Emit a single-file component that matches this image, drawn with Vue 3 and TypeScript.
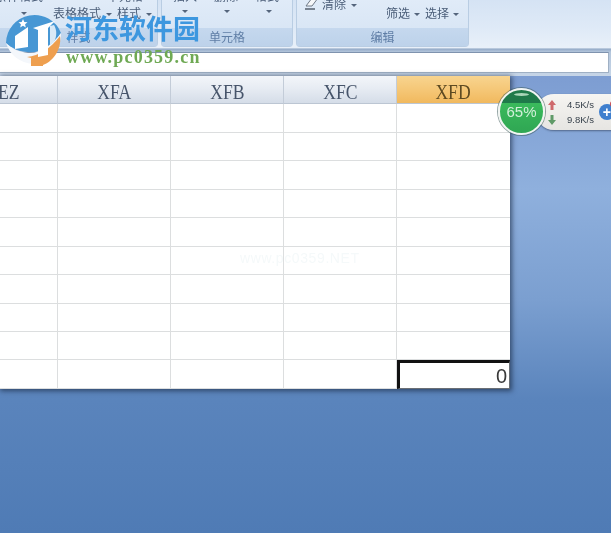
<script setup lang="ts">
const columns: string[] = ['EZ', 'XFA', 'XFB', 'XFC', 'XFD']
const rowCount = 10
const rows: number[] = Array.from({ length: rowCount }, (_, i) => i)
</script>

<template>
  <div class="page">
    <header class="ribbon">
      <section class="group g1">
        <div class="body">
          <div class="clipped c1"><span>条件格式</span><span>单元格</span></div>
          <div class="tools t1">
            <i class="caret lone" />
            <span class="tool">表格格式<i class="caret" /></span>
            <span class="tool">样式<i class="caret" /></span>
          </div>
        </div>
        <div class="label">样式</div>
      </section>
      <section class="group g2">
        <div class="body">
          <div class="clipped c2"><span>插入</span><span>删除</span><span>格式</span></div>
          <div class="tools t2"><i class="caret" /><i class="caret" /><i class="caret" /></div>
        </div>
        <div class="label">单元格</div>
      </section>
      <section class="group g3">
        <div class="body b3">
          <div class="clear">
            <svg width="15" height="12" viewBox="0 0 15 12">
              <path d="M2 8 8 0h6L8 8z" fill="#f6f7f9" stroke="#6f7885" />
              <path d="M1 11h10" stroke="#4d5663" stroke-width="1.400" />
            </svg>
            <span class="tool">清除<i class="caret" /></span>
          </div>
          <div class="tools t3">
            <span class="tool">筛选<i class="caret" /></span>
            <span class="tool">选择<i class="caret" /></span>
          </div>
        </div>
        <div class="label">编辑</div>
      </section>
    </header>

    <div class="formula"><div class="input" /></div>

    <main class="sheet">
      <div class="grid">
        <div
          v-for="c in columns"
          :key="c"
          class="head"
          :class="{ active: c === 'XFD', first: c === 'EZ' }"
        ><span>{{ c }}</span></div>
        <template v-for="r in rows" :key="r">
          <div
            v-for="c in columns"
            :key="c"
            class="cell"
            :class="{ selected: c === 'XFD' && r === rowCount - 1 }"
          >{{ c === 'XFD' && r === rowCount - 1 ? '0' : '' }}</div>
        </template>
      </div>
    </main>

    <div class="faint">www.pc0359.NET</div>

    <div class="brand">
      <svg class="logo" width="70" height="70" viewBox="0 0 70 70">
        <path d="M6 43A28.500 28.500 0 0 1 61 33C53 45 40 54 27 52 18 51 11 48 6 43z" fill="#4797d4" />
        <path d="M6 43C12 49 20 52 28 53 40 54 52 45 61 33 61 38 60 42 58 46 52 55 42 62 33 64 20 63 10 55 6 43z" fill="#f4f7fb" />
        <path d="M27 57C39 56 51 48 60 36 62 50 52 62 43 65V66H31V58z" fill="#ee9f4f" />
        <path d="M15 36 28 27V47L15 49z" fill="#fff" />
        <path d="M33 28 55 21 48 28V55L38 57V30z" fill="#fff" />
        <path d="M50 26 54 25C57 30 57 36 54 42L50 45z" fill="#d9e9f6" />
        <path d="M23 19l1.300 2.900 3.200.300-2.400 2.100.700 3.100-2.800-1.600-2.800 1.600.700-3.100-2.400-2.100 3.200-.300z" fill="#fff" />
      </svg>
      <div class="brand-name">河东软件园</div>
      <div class="brand-url">www.pc0359.cn</div>
    </div>

    <aside class="net">
      <div class="pill">
        <div class="arrows">
          <svg width="8" height="10" viewBox="0 0 8 10"><path d="M4 0 8 5H5.500V10h-3V5H0z" fill="#cf6a6c" /></svg>
          <svg width="8" height="10" viewBox="0 0 8 10"><path d="M4 10 8 5H5.500V0h-3V5H0z" fill="#5f9a68" /></svg>
        </div>
        <div class="speeds"><span>4.5K/s</span><span>9.8K/s</span></div>
        <div class="plus">+<i class="dot" /></div>
      </div>
      <div class="ball"><div class="cap" /><span>65%</span></div>
    </aside>
  </div>
</template>

<style scoped>
.page {
  position: relative;
  width: 611px;
  height: 533px;
  overflow: hidden;
  background: linear-gradient(180deg, #7d9dd2 76px, #8fb0dd 190px, #7b9fd0 300px, #5a84bc 400px, #4f7bb5 533px);
  font-family: "Noto Sans CJK SC", "Liberation Sans", sans-serif;
  filter: blur(0.35px);
}
.ribbon {
  display: flex;
  gap: 3px;
  height: 49px;
  box-sizing: border-box;
  padding-bottom: 2px;
  background: linear-gradient(180deg, #d5e3f4 0%, #dfeaf7 60%, #e9f0f9 100%);
  border-bottom: 1px solid #b8c8dc;
}
.group {
  display: flex;
  flex-direction: column;
  height: 47px;
  box-sizing: border-box;
  border: 1px solid #b9cde3;
  border-top: 0;
  border-radius: 0 0 4px 4px;
  background: linear-gradient(180deg, #e0ebf8, #d5e3f3);
}
.g1 { width: 158px; border-left: 0; border-radius: 0 0 4px 0; }
.g2 { width: 132px; }
.g3 { width: 173px; }
.body { height: 28px; position: relative; overflow: hidden; }
.label {
  height: 18px;
  line-height: 17px;
  text-align: center;
  font-size: 12px;
  color: #5f7ea6;
  background: linear-gradient(180deg, #c5d8ee, #bdd2ea);
}
.tool { font-size: 12px; line-height: 14px; color: #4a5d78; white-space: nowrap; }
.caret {
  display: inline-block;
  margin-left: 5px;
  vertical-align: middle;
  border: 3px solid transparent;
  border-top: 3px solid #55657c;
  border-bottom: 0;
}
.clipped {
  display: flex;
  margin-top: -11px;
  height: 14px;
  font-size: 12px;
  line-height: 14px;
  color: #4a5d78;
}
.c1 { gap: 64px; margin-left: -5px; }
.c2 { gap: 17px; padding-left: 11px; }
.tools { display: flex; }
.t1 { gap: 5px; padding-left: 21px; margin-top: 3px; align-items: center; }
.t1 .lone { margin: 0 21px 0 0; }
.t2 { gap: 36px; padding-left: 20px; margin-top: 7px; }
.t2 .caret { margin-left: 0; }
.b3 { display: flex; }
.clear { display: flex; gap: 3px; align-items: flex-start; padding-left: 7px; margin-top: -3px; height: 16px; width: 82px; flex: none; }
.clear svg { margin-top: 1px; }
.t3 { gap: 5px; margin-top: 6px; }
.t3 .caret { margin-left: 4px; }

.formula {
  height: 27px;
  box-sizing: border-box;
  padding: 3px 2px 4px 0;
  background: linear-gradient(180deg, #95abc8 0, #b4c6dc 3px, #c6d5e7 100%);
}
.input {
  height: 19px;
  background: #fff;
  border: 1px solid #9fb0c4;
  border-left: 0;
  border-top-color: #7f93ae;
}
.sheet {
  width: 510px;
  box-shadow: 1px 1px 5px 1px rgba(20, 35, 60, .65);
  background: #fff;
}
.grid {
  display: grid;
  grid-template-columns: 58px 113px 113px 113px 113px;
  grid-auto-rows: 28.45px;
}
.head {
  height: 28px;
  line-height: 31px;
  text-align: center;
  font-family: "Liberation Serif", serif;
  font-size: 22px;
  color: #46546a;
  background: linear-gradient(180deg, #f3f6fa 0%, #e7ecf3 45%, #d5dde8 100%);
  border-right: 1px solid #c3ccd8;
  border-bottom: 1px solid #bcc6d3;
  box-sizing: border-box;
  overflow: hidden;
}
.head span { display: inline-block; transform: scaleX(0.8); transform-origin: center; }
.head.first { text-align: left; }
.head.first span { transform-origin: left; margin-left: -2px; }
.head.active {
  background: linear-gradient(180deg, #f8d48f 0%, #f5c777 50%, #f1b95e 100%);
  color: #5d4a22;
  border-right: 0;
}
.cell {
  box-sizing: border-box;
  background: #fff;
  border-right: 1px solid #dcdedf;
  border-bottom: 1px solid #dcdedf;
}
.cell:nth-child(5n) { border-right: 0; }
.cell.selected {
  position: relative;
  border: 1px solid #6a6f75;
  border-top: 3px solid #111;
  border-left: 3px solid #111;
  text-align: right;
  padding-right: 2px;
  font-family: "Liberation Sans", sans-serif;
  font-size: 20px;
  line-height: 26px;
  color: #3a3a3a;
}
.faint {
  position: absolute;
  left: 240px;
  top: 249px;
  font: 14px/18px "Liberation Sans", sans-serif;
  letter-spacing: 0.6px;
  color: #f5f9fa;
}
.brand { position: absolute; left: 0; top: 0; width: 210px; height: 70px; }
.logo { position: absolute; left: 0; top: 0; }
.brand-name {
  position: absolute;
  left: 65px;
  top: 10px;
  font: 700 27px/36px "Noto Sans CJK SC", sans-serif;
  color: #3d97df;
  white-space: nowrap;
}
.brand-url {
  position: absolute;
  left: 66px;
  top: 47px;
  font: 700 18px/20px "Liberation Serif", serif;
  letter-spacing: 1.200px;
  color: #6fa954;
  white-space: nowrap;
}
.net { position: absolute; left: 498px; top: 88px; width: 113px; height: 48px; }
.ball {
  position: absolute;
  left: 0;
  top: 0;
  width: 47px;
  height: 47px;
  box-sizing: border-box;
  border-radius: 50%;
  border: 2px solid #f1f5f2;
  background: linear-gradient(180deg, #1f7a4a 0, #1f7a4a 13px, #3aba5c 13px, #2fa653 100%);
  overflow: hidden;
  text-align: center;
  color: #d2f0da;
  font: 15px/44px "Liberation Sans", sans-serif;
  box-shadow: 0 0 0 1px rgba(60, 90, 90, .55);
}
.cap {
  position: absolute;
  left: 14px;
  top: 3px;
  width: 15px;
  height: 3px;
  border-radius: 50%;
  background: #a9d6b8;
}
.ball span { position: relative; }
.pill {
  position: absolute;
  left: 38px;
  top: 6px;
  width: 90px;
  height: 36px;
  display: flex;
  align-items: center;
  box-sizing: border-box;
  padding-left: 11px;
  border-radius: 18px 0 0 18px;
  background: linear-gradient(180deg, #f6f5f2, #e6e5e2);
  box-shadow: 0 1px 2px rgba(30, 40, 60, .5);
}
.arrows { display: flex; flex-direction: column; gap: 5px; width: 20px; padding-left: 1px; box-sizing: border-box; }
.arrows svg { display: block; }
.speeds { display: flex; flex-direction: column; font: 9.500px/15px "Liberation Sans", sans-serif; color: #39434d; }
.plus {
  position: relative;
  width: 16px;
  height: 16px;
  margin-left: 5px;
  flex: none;
  border-radius: 50%;
  background: #3f7fce;
  color: #fff;
  text-align: center;
  font: 700 14px/16px "Liberation Sans", sans-serif;
}
.dot {
  position: absolute;
  left: 11px;
  top: -3px;
  width: 6px;
  height: 6px;
  border-radius: 50%;
  background: #c9474d;
}
</style>
